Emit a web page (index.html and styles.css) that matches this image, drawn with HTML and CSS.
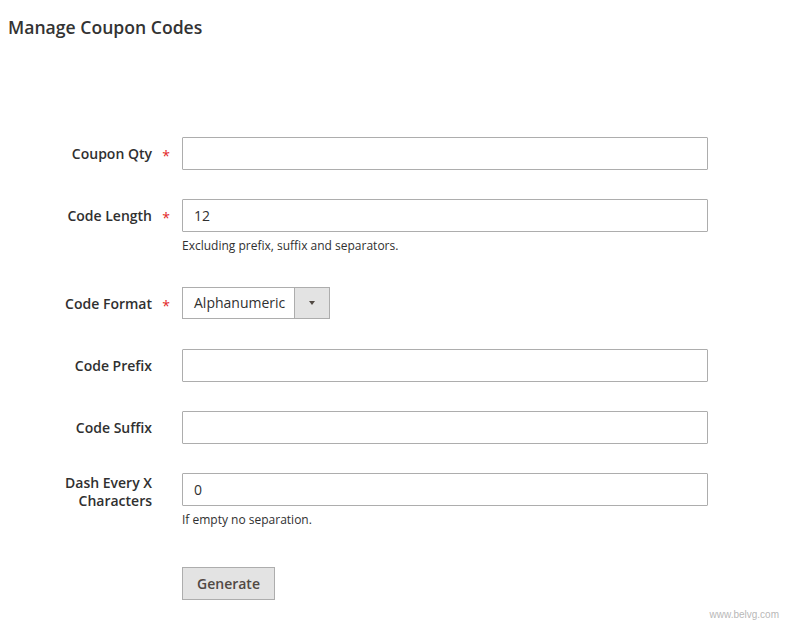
FILE: index.html
```html
<!DOCTYPE html>
<html lang="en">
<head>
    <meta charset="UTF-8">
    <title>Manage Coupon Codes</title>
    <link rel="stylesheet" href="styles.css">
</head>
<body>

    <h1 class="page-title">Manage Coupon Codes</h1>

    <form class="coupon-form">
        <div class="field required">
            <label class="field-label" for="qty">Coupon Qty</label>
            <div class="field-control">
                <input type="text" id="qty" class="text-input">
            </div>
        </div>

        <div class="field required">
            <label class="field-label" for="length">Code Length</label>
            <div class="field-control">
                <input type="text" id="length" class="text-input" value="12">
                <div class="field-note">Excluding prefix, suffix and separators.</div>
            </div>
        </div>

        <div class="field required">
            <label class="field-label" for="format">Code Format</label>
            <div class="field-control">
                <div class="select-box">
                    <span class="select-value">Alphanumeric</span>
                    <span class="select-arrow"></span>
                </div>
            </div>
        </div>

        <div class="field">
            <label class="field-label" for="prefix">Code Prefix</label>
            <div class="field-control">
                <input type="text" id="prefix" class="text-input">
            </div>
        </div>

        <div class="field">
            <label class="field-label" for="suffix">Code Suffix</label>
            <div class="field-control">
                <input type="text" id="suffix" class="text-input">
            </div>
        </div>

        <div class="field">
            <label class="field-label" for="dash">Dash Every X Characters</label>
            <div class="field-control">
                <input type="text" id="dash" class="text-input" value="0">
                <div class="field-note">If empty no separation.</div>
            </div>
        </div>

        <div class="actions">
            <button type="button" class="btn">Generate</button>
        </div>
    </form>

    <div class="watermark">www.belvg.com</div>

</body>
</html>
```

FILE: styles.css
```css
body {
    margin: 0;
    font-family: "Open Sans", "Liberation Sans", sans-serif;
    color: #303030;
    background: #fff;
    width: 786px;
    height: 625px;
    position: relative;
    overflow: hidden;
}
.page-title {
    margin: 0;
    padding: 16px 8px 0;
    font-size: 17.6px;
    line-height: 22px;
    font-weight: 600;
    color: #333;
}
.coupon-form {
    margin-top: 99px;
}
.field {
    display: flex;
    align-items: flex-start;
    margin-bottom: 29px;
}
.field-label {
    box-sizing: border-box;
    width: 182px;
    min-height: 33px;
    padding-top: 1px;
    padding-right: 30px;
    padding-left: 50px;
    display: flex;
    align-items: center;
    justify-content: flex-end;
    text-align: right;
    font-size: 14px;
    line-height: 18px;
    font-weight: 600;
    color: #303030;
    position: relative;
}
.required .field-label::after {
    content: "*";
    position: absolute;
    right: 12px;
    top: 10px;
    color: #e22626;
    font-size: 14px;
    font-weight: 400;
}
.field-control {
    width: 526px;
}
.text-input {
    box-sizing: border-box;
    width: 526px;
    height: 33px;
    border: 1px solid #adadad;
    border-radius: 1px;
    padding: 0 11px;
    font-family: inherit;
    font-size: 14px;
    color: #303030;
    margin: 0;
    display: block;
}
.field-note {
    margin-top: 5px;
    margin-bottom: 4px;
    font-size: 12px;
    line-height: 17px;
    color: #303030;
}
.select-box {
    box-sizing: border-box;
    width: 148px;
    height: 32px;
    border: 1px solid #adadad;
    display: flex;
    font-size: 14px;
}
.select-value {
    flex: 1;
    padding-left: 11px;
    line-height: 30px;
}
.select-arrow {
    width: 34px;
    border-left: 1px solid #adadad;
    background: #e3e3e3;
    position: relative;
}
.select-arrow::after {
    content: "";
    position: absolute;
    left: 14px;
    top: 13px;
    border-left: 3.5px solid transparent;
    border-right: 3.5px solid transparent;
    border-top: 4px solid #514943;
}
.actions {
    padding-left: 182px;
    margin-top: 35px;
}
.btn {
    box-sizing: border-box;
    width: 93px;
    height: 33px;
    background: #e3e3e3;
    border: 1px solid #adadad;
    border-radius: 0;
    font-family: inherit;
    font-size: 14px;
    font-weight: 600;
    color: #514943;
    padding: 0;
}
.watermark {
    position: absolute;
    right: 7px;
    bottom: 5px;
    font-family: "Liberation Sans", Arial, sans-serif;
    font-size: 10px;
    color: #b8b8b8;
}
```
